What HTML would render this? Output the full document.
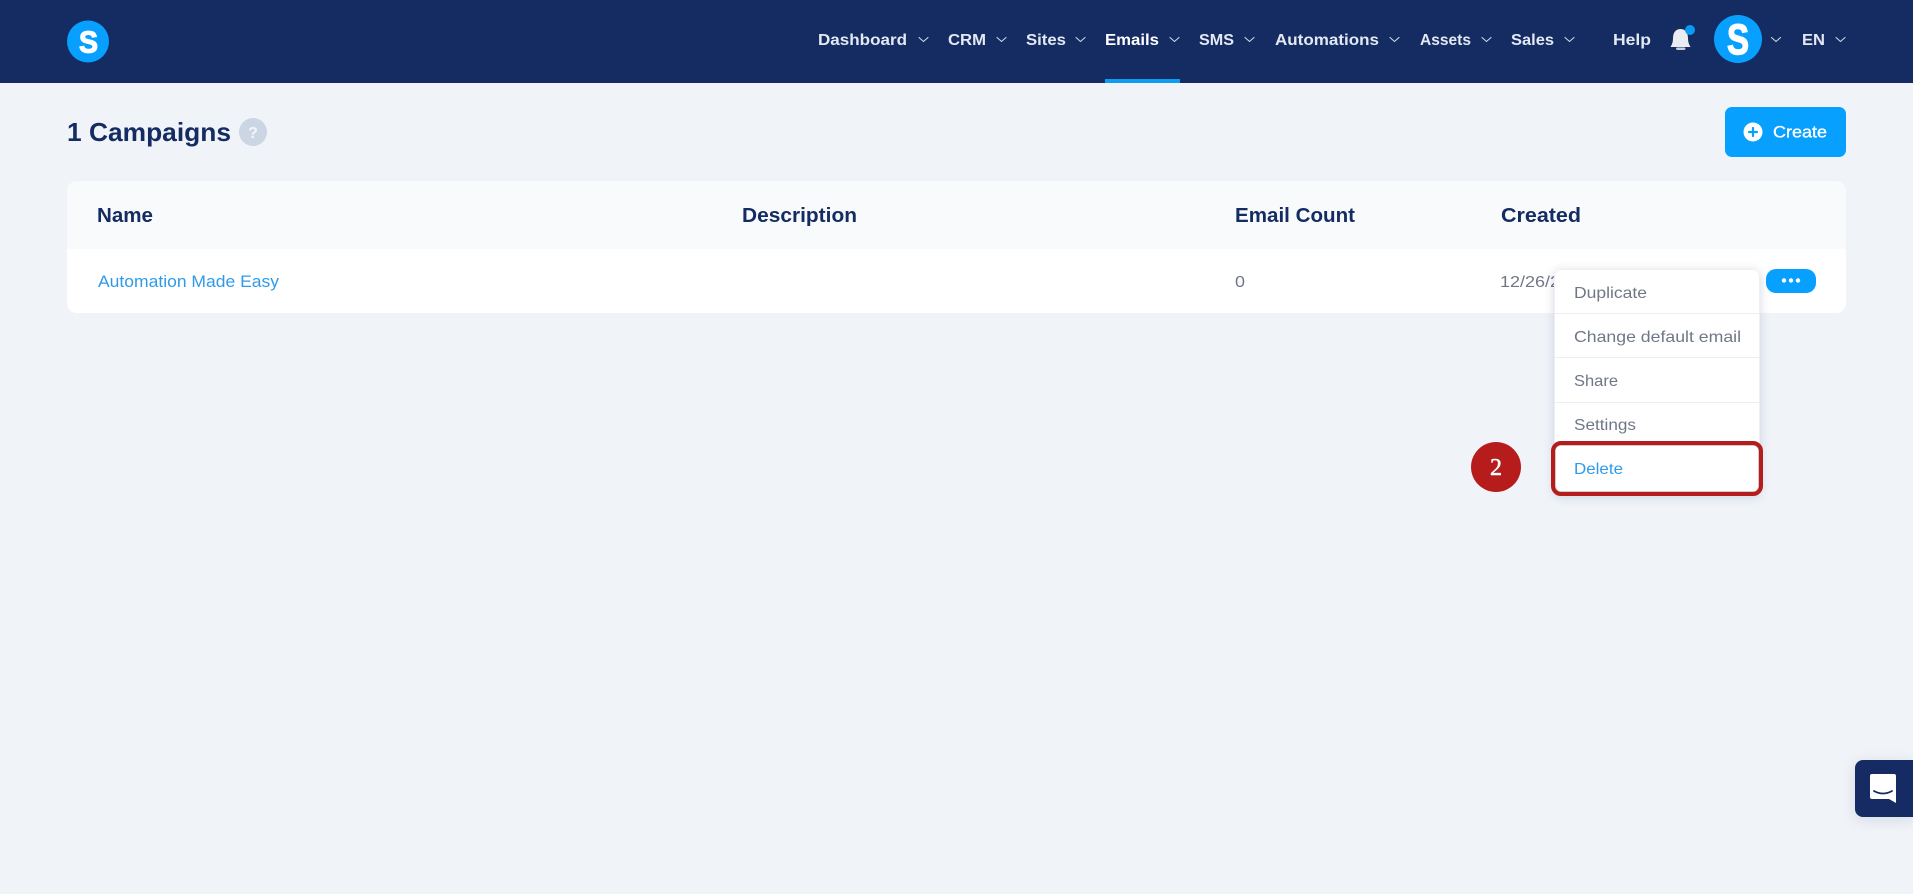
<!DOCTYPE html>
<html lang="en"><head><meta charset="utf-8"><title>Campaigns</title>
<style>
html,body{margin:0;padding:0;width:1913px;height:894px;overflow:hidden;background:#F0F4F9}
svg{display:block;position:absolute;left:0;top:0}
text{font-family:"Liberation Sans",sans-serif}
.n{font-size:16px;font-weight:700;fill:#E3E9F2}
.h{font-size:20px;font-weight:700;fill:#152C63}
.m{font-size:16px;fill:#6F7787}
.c{fill:none;stroke:#CBD5E5;stroke-width:1.1;stroke-linecap:round;stroke-linejoin:round}
</style></head><body>
<svg width="1913" height="894" viewBox="0 0 1913 894" xmlns="http://www.w3.org/2000/svg">
<defs>
<filter id="s1" x="-20%" y="-20%" width="140%" height="140%"><feDropShadow dx="0" dy="2" stdDeviation="5" flood-color="#1a2b50" flood-opacity=".16"/></filter>
<filter id="s2" x="-40%" y="-40%" width="180%" height="180%"><feDropShadow dx="0" dy="3" stdDeviation="7" flood-color="#1a2b50" flood-opacity=".12"/></filter>
</defs>
<rect width="1913" height="894" fill="#F0F4F9"/>
<!-- header -->
<rect width="1913" height="83" fill="#152C63"/>
<circle cx="88" cy="41.5" r="21" fill="#08A0FF"/>
<text x="79" y="52.500" font-size="31" font-weight="700" fill="#fff" stroke="#fff" stroke-width="1.200" textLength="19" lengthAdjust="spacingAndGlyphs">S</text>
<text class="n" x="818" y="45" textLength="89" lengthAdjust="spacingAndGlyphs">Dashboard</text>
<path class="c" d="M919 37.500l4.500 4 4.500-4"/>
<text class="n" x="948" y="45" textLength="38" lengthAdjust="spacingAndGlyphs">CRM</text>
<path class="c" d="M997 37.500l4.500 4 4.500-4"/>
<text class="n" x="1026" y="45" textLength="40" lengthAdjust="spacingAndGlyphs">Sites</text>
<path class="c" d="M1076 37.500l4.500 4 4.500-4"/>
<text class="n" x="1105" y="45" textLength="54" lengthAdjust="spacingAndGlyphs" style="fill:#fff">Emails</text>
<path class="c" d="M1170 37.500l4.500 4 4.500-4"/>
<text class="n" x="1199" y="45" textLength="35" lengthAdjust="spacingAndGlyphs">SMS</text>
<path class="c" d="M1245 37.500l4.500 4 4.500-4"/>
<text class="n" x="1275" y="45" textLength="104" lengthAdjust="spacingAndGlyphs">Automations</text>
<path class="c" d="M1390 37.500l4.500 4 4.500-4"/>
<text class="n" x="1420" y="45" textLength="51" lengthAdjust="spacingAndGlyphs">Assets</text>
<path class="c" d="M1482 37.500l4.500 4 4.500-4"/>
<text class="n" x="1511" y="45" textLength="43" lengthAdjust="spacingAndGlyphs">Sales</text>
<path class="c" d="M1565 37.500l4.500 4 4.500-4"/>
<text class="n" x="1613" y="45" textLength="38" lengthAdjust="spacingAndGlyphs">Help</text>
<rect x="1105" y="79" width="75" height="4" fill="#0F9BF0"/>
<!-- bell -->
<path d="M1680.500 29c-5.500 0-7.500 4.500-7.500 9.500 0 3.500-1 6-2.500 8.500h20c-1.500-2.500-2.500-5-2.500-8.500 0-5-2-9.500-7.500-9.500z" fill="#E9ECF1"/>
<rect x="1676" y="47.500" width="9.500" height="2.500" rx="1.200" fill="#C9CFDA"/>
<circle cx="1690" cy="30" r="5" fill="#0A9BF5"/>
<!-- avatar -->
<circle cx="1738" cy="39" r="24" fill="#08A0FF"/>
<text x="1727" y="54" font-size="43" font-weight="700" fill="#fff" stroke="#fff" stroke-width="1.400" textLength="22" lengthAdjust="spacingAndGlyphs">S</text>
<path class="c" d="M1771.500 37.500l4.500 4 4.500-4"/>
<text class="n" x="1802" y="45" textLength="23" lengthAdjust="spacingAndGlyphs">EN</text>
<path class="c" d="M1836 37.500l4.500 4 4.500-4"/>
<!-- title -->
<text x="67" y="141" font-size="26" font-weight="700" fill="#152C63" textLength="164" lengthAdjust="spacingAndGlyphs">1 Campaigns</text>
<circle cx="253" cy="132" r="14" fill="#CBD5E3"/>
<text x="253" y="138" text-anchor="middle" font-size="16" font-weight="700" fill="#F2F5F9">?</text>
<!-- create -->
<rect x="1725" y="107" width="121" height="50" rx="7" fill="#08A0FF"/>
<circle cx="1753" cy="132" r="9.500" fill="#fff"/>
<path d="M1753 128v8M1749 132h8" stroke="#08A0FF" stroke-width="2.200" stroke-linecap="round"/>
<text x="1773" y="137.500" font-size="17" font-weight="400" fill="#fff" stroke="#fff" stroke-width=".3" textLength="54" lengthAdjust="spacingAndGlyphs">Create</text>
<!-- table -->
<path d="M77 181h1759a10 10 0 0 1 10 10v58H67v-58a10 10 0 0 1 10-10z" fill="#F8FAFC"/>
<path d="M67 249h1779v54a10 10 0 0 1-10 10H77a10 10 0 0 1-10-10z" fill="#fff"/>
<text class="h" x="97" y="222" textLength="56" lengthAdjust="spacingAndGlyphs">Name</text>
<text class="h" x="742" y="222" textLength="115" lengthAdjust="spacingAndGlyphs">Description</text>
<text class="h" x="1235" y="222" textLength="120" lengthAdjust="spacingAndGlyphs">Email Count</text>
<text class="h" x="1501" y="222" textLength="80" lengthAdjust="spacingAndGlyphs">Created</text>
<text x="98" y="287" font-size="16.500" fill="#2F9BE8" textLength="181" lengthAdjust="spacingAndGlyphs">Automation Made Easy</text>
<text class="m" x="1235" y="287" textLength="10" lengthAdjust="spacingAndGlyphs">0</text>
<text class="m" x="1500" y="287" textLength="70" lengthAdjust="spacingAndGlyphs">12/26/20</text>
<!-- dots -->
<rect x="1766" y="269" width="50" height="24" rx="10" fill="#08A0FF"/>
<circle cx="1784" cy="280.500" r="2.200" fill="#fff"/><circle cx="1791" cy="280.500" r="2.200" fill="#fff"/><circle cx="1798" cy="280.500" r="2.200" fill="#fff"/>
<!-- dropdown -->
<rect x="1554" y="269" width="206" height="226" rx="7" fill="#fff" filter="url(#s1)"/>
<rect x="1554.500" y="269.500" width="205" height="225" rx="7" fill="none" stroke="#EDF0F4"/>
<path d="M1554 313.500h206M1554 357.500h206M1554 402.500h206" stroke="#EBEEF3" stroke-width="1"/>
<text class="m" x="1574" y="298" textLength="73" lengthAdjust="spacingAndGlyphs">Duplicate</text>
<text class="m" x="1574" y="342" textLength="167" lengthAdjust="spacingAndGlyphs">Change default email</text>
<text class="m" x="1574" y="386" textLength="44" lengthAdjust="spacingAndGlyphs">Share</text>
<text class="m" x="1574" y="430" textLength="62" lengthAdjust="spacingAndGlyphs">Settings</text>
<text x="1574" y="474" font-size="16" fill="#2F9BE8" textLength="49" lengthAdjust="spacingAndGlyphs">Delete</text>
<!-- annotation -->
<rect x="1555" y="445" width="204" height="47" rx="6" fill="none" stroke="#9a9a9a" stroke-width="1"/>
<rect x="1553" y="443" width="208" height="51" rx="8" fill="none" stroke="#B71C1C" stroke-width="4"/>
<circle cx="1496" cy="467" r="25" fill="#B71C1C"/>
<text x="1496" y="475" text-anchor="middle" font-size="24" style="font-family:'Liberation Serif',serif" fill="#fff" stroke="#fff" stroke-width=".5">2</text>
<!-- chat -->
<path d="M1913 760h-50a8 8 0 0 0-8 8v41a8 8 0 0 0 8 8h50z" fill="#152C63" filter="url(#s2)"/>
<path d="M1872 774h22a2 2 0 0 1 2 2v27l-7-4h-17a2 2 0 0 1-2-2v-21a2 2 0 0 1 2-2z" fill="#fff"/>
<path d="M1874 791q9 5 18 0" fill="none" stroke="#152C63" stroke-width="1.800" stroke-linecap="round"/>
</svg>
</body></html>
